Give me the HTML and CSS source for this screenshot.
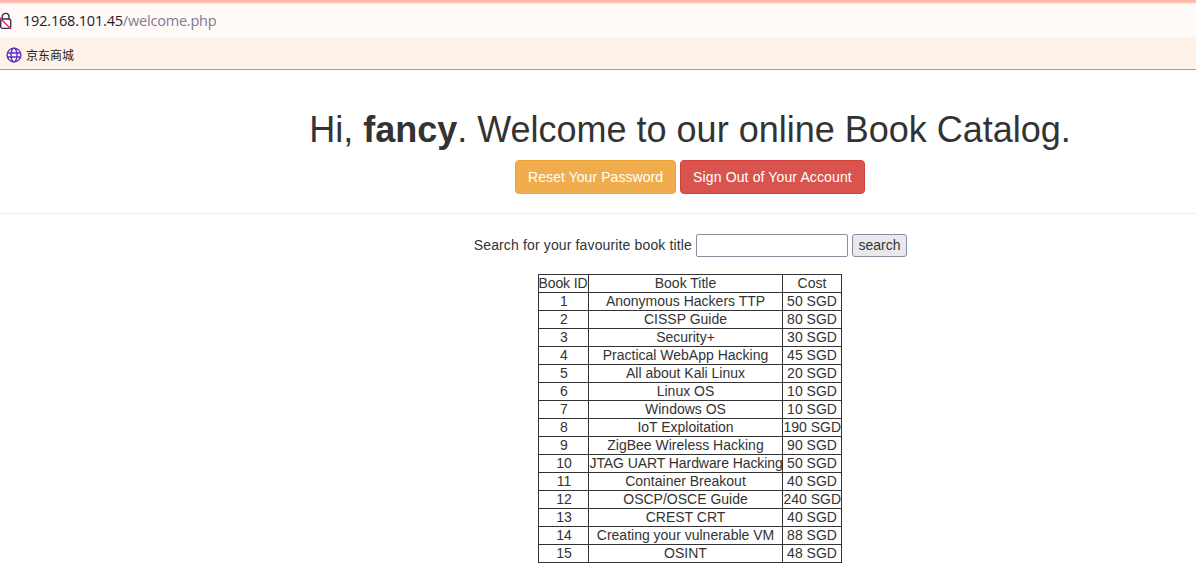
FILE: index.html
```html
<!DOCTYPE html>
<html lang="en">
<head>
<meta charset="utf-8">
<title>Welcome</title>
<link rel="stylesheet" href="styles.css">
</head>
<body>
<div class="chrome">
  <div class="topline"></div>
  <div class="addressbar">
    <svg class="lock" width="12" height="18" viewBox="0 0 12 18" aria-hidden="true">
      <path d="M2.2 7V4.8a3.4 3.4 0 0 1 6.8 0V7" fill="none" stroke="#3a3048" stroke-width="1.4"/>
      <rect x="0.7" y="7" width="10" height="9.4" rx="1.8" fill="none" stroke="#3a3048" stroke-width="1.4"/>
      <path d="M-1 5L11 17" stroke="#e0245e" stroke-width="1.4"/>
    </svg>
    <span class="url"><span class="host">192.168.101.45</span><span class="path">/welcome.php</span></span>
  </div>
  <div class="bookmarks">
    <span class="bookmark">
      <svg width="16" height="16" viewBox="0 0 16 16" aria-hidden="true">
        <g fill="none" stroke="#5b30c4" stroke-width="1.4">
          <circle cx="8" cy="8" r="6.9"/>
          <ellipse cx="8" cy="8" rx="3" ry="6.9"/>
          <path d="M1.5 6h13M1.5 10h13"/>
        </g>
      </svg>
      <span class="bookmark-label">京东商城</span>
    </span>
  </div>
</div>
<main class="content">
  <div class="page-header">
    <h1>Hi, <b>fancy</b>. Welcome to our online Book Catalog.</h1>
    <p class="actions">
      <a class="btn btn-warning" href="#">Reset Your Password</a>
      <a class="btn btn-danger" href="#">Sign Out of Your Account</a>
    </p>
  </div>
  <form class="search">
    <label for="q">Search for your favourite book title</label>
    <input id="q" type="text">
    <button type="button">search</button>
  </form>
  <div class="table-wrap">
  <table class="books">
    <colgroup><col class="col-id"><col class="col-title"><col class="col-cost"></colgroup>
    <tr><td>Book ID</td><td>Book Title</td><td>Cost</td></tr>
    <tr><td>1</td><td>Anonymous Hackers TTP</td><td>50 SGD</td></tr>
    <tr><td>2</td><td>CISSP Guide</td><td>80 SGD</td></tr>
    <tr><td>3</td><td>Security+</td><td>30 SGD</td></tr>
    <tr><td>4</td><td>Practical WebApp Hacking</td><td>45 SGD</td></tr>
    <tr><td>5</td><td>All about Kali Linux</td><td>20 SGD</td></tr>
    <tr><td>6</td><td>Linux OS</td><td>10 SGD</td></tr>
    <tr><td>7</td><td>Windows OS</td><td>10 SGD</td></tr>
    <tr><td>8</td><td>IoT Exploitation</td><td>190 SGD</td></tr>
    <tr><td>9</td><td>ZigBee Wireless Hacking</td><td>90 SGD</td></tr>
    <tr><td>10</td><td class="tight">JTAG UART Hardware Hacking</td><td>50 SGD</td></tr>
    <tr><td>11</td><td>Container Breakout</td><td>40 SGD</td></tr>
    <tr><td>12</td><td>OSCP/OSCE Guide</td><td>240 SGD</td></tr>
    <tr><td>13</td><td>CREST CRT</td><td>40 SGD</td></tr>
    <tr><td>14</td><td>Creating your vulnerable VM</td><td>88 SGD</td></tr>
    <tr><td>15</td><td>OSINT</td><td>48 SGD</td></tr>
  </table>
  </div>
</main>
</body>
</html>
```
FILE: styles.css
```css
* { box-sizing: border-box; }
html, body { margin: 0; padding: 0; height: 100%; overflow: hidden; }
body {
  font-family: "Liberation Sans", Arial, sans-serif;
  font-size: 14px;
  line-height: 20px;
  color: #333;
  background: #fff;
  text-align: center;
}
.chrome { text-align: left; }
.topline { height: 4px; background: linear-gradient(#ffb9a8 0, #ffb9a8 2px, #fff6f2 4px); }
.addressbar {
  height: 33px;
  background: #fffaf7;
  display: flex;
  align-items: center;
  overflow: hidden;
}
.lock { margin-top: 1px; flex: none; }
.url { margin-left: 11px; font-size: 14.5px; font-family: "Open Sans", "Liberation Sans", sans-serif; letter-spacing: -0.2px; }
.host { color: #1d1b26; }
.path { color: #7d7a92; }
.bookmarks {
  height: 33px;
  background: #fff2e8;
  border-bottom: 1px solid #a89a90;
  display: flex;
  align-items: center;
  padding: 4px 0 0 6px;
}
.bookmark { display: flex; align-items: center; gap: 4px; }
.bookmark-label { font-family: "Noto Sans CJK SC", sans-serif; font-size: 12px; color: #1d1b26; }
.content { padding-left: 184px; }
.page-header {
  height: 144px;
  margin-left: -184px;
  padding: 40px 0 0 184px;
  border-bottom: 1px solid #eee;
}
h1 {
  margin: 0;
  font-size: 36px;
  font-weight: 500;
  line-height: 40px;
}
h1 b { font-weight: 700; }
.actions { margin: 10px 0 0; display: flex; justify-content: center; gap: 4px; }
.btn {
  display: block;
  padding: 6px 12px;
  border: 1px solid;
  border-radius: 4px;
  color: #fff;
  text-decoration: none;
  height: 34px;
}
.btn-warning { background: #f0ad4e; border-color: #eea236; letter-spacing: 0.06px; }
.btn-danger { background: #d9534f; border-color: #d43f3a; letter-spacing: 0.13px; }
.search { margin-top: 20px; height: 23px; display: flex; justify-content: center; align-items: center; gap: 4px; }
.search label { width: 219px; flex: none; margin: -2px 0 0; letter-spacing: 0.14px; text-align: right; white-space: nowrap; }
.search input {
  width: 152px; height: 23px; padding: 1px 2px;
  border: 1px solid #8f8c9e; border-radius: 2px; background: #fff; font: inherit;
}
.search button {
  width: 55px; height: 23px; padding: 0 0 2px;
  border: 1px solid #8f8c9e; border-radius: 3px; background: #e9e9ed; color: #333;
  font: inherit;
}
.table-wrap { display: flex; justify-content: center; margin-top: 17px; padding-right: 1px; }
.books {
  width: 303px;
  table-layout: fixed;
  border-collapse: collapse;
  border: 1px solid #333;
}
.col-id { width: 50px; }
.col-title { width: 194px; }
.col-cost { width: 59px; }
.books td {
  border: 1px solid #333;
  padding: 0;
  height: 18px;
  line-height: 17px;
  text-align: center;
  white-space: nowrap;
}
.books td:nth-child(1) { padding-left: 2px; }
.books td:nth-child(2) { padding-left: 1px; }
.books td:nth-child(3) { padding-left: 1px; }
.books tr:first-child td:first-child { letter-spacing: -0.1px; padding-left: 0; }
.books .tight { letter-spacing: -0.08px; padding-left: 0; }
```
